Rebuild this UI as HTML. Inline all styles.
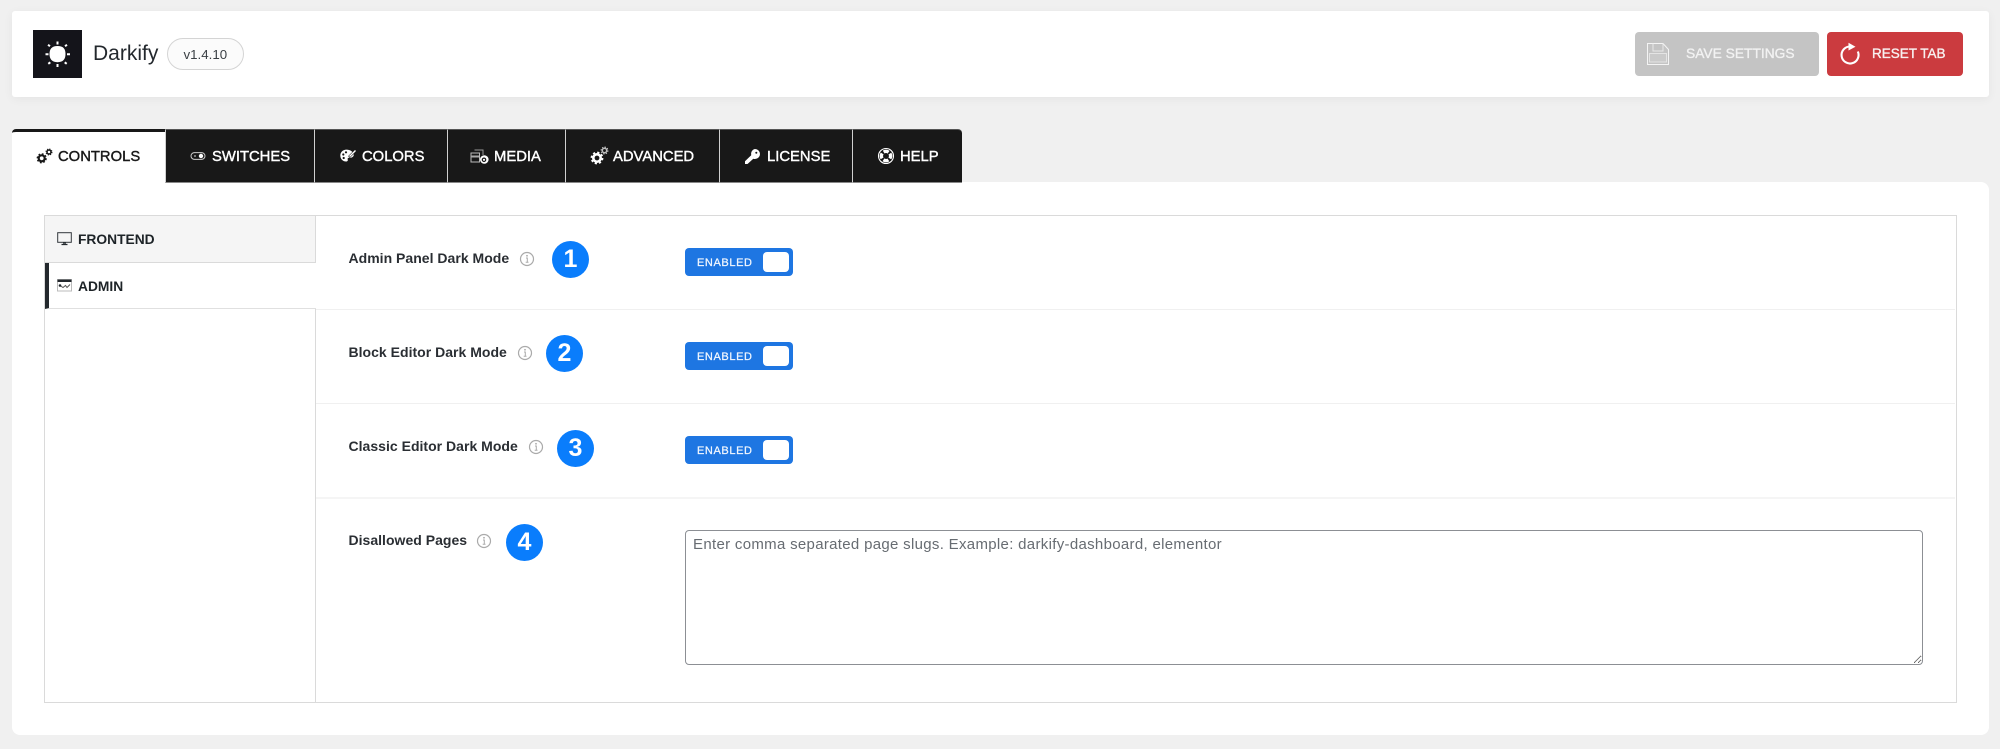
<!DOCTYPE html>
<html lang="en"><head><meta charset="utf-8"><title>Darkify</title>
<style>
*{box-sizing:border-box}
html,body{margin:0;padding:0;background:#f0f0f0}
body{width:2000px;height:749px;overflow:hidden;font-family:"Liberation Sans",sans-serif;position:relative;color:#1d2327;filter:blur(.3px)}
.a{position:absolute}
.t{position:absolute;white-space:nowrap;line-height:1}
.tab{position:absolute;top:129px;height:54px;background:#181818;border-left:1px solid #d0d0d0;border-top:1px solid #555;border-bottom:1px solid #888}
.tl{position:absolute;white-space:nowrap;line-height:1;top:150px;font-size:14.800px;font-weight:400;color:#fff;-webkit-text-stroke:.4px currentColor}
.lab{position:absolute;left:348.500px;font-size:14px;font-weight:700;color:#2a2e33;white-space:nowrap;line-height:1;letter-spacing:.02px}
.badge{position:absolute;width:37px;height:37px;border-radius:50%;background:#0a7dfc;color:#fff;font-size:25px;font-weight:700;text-align:center;line-height:37px}
.tog{position:absolute;left:685px;width:108px;height:28px;background:#1e76e2;border-radius:4px}
.tog span{position:absolute;left:12px;top:10px;font-size:11px;line-height:1;color:#f2f7fe;letter-spacing:.6px;font-weight:400;-webkit-text-stroke:.25px #f2f7fe}
.tog i{position:absolute;left:78px;top:4px;width:26px;height:20px;background:#fff;border-radius:4px}
.sep{position:absolute;left:316px;width:1639px;height:1px;background:#f0f0f0}
textarea::placeholder{color:#676c72;opacity:1}
</style></head><body>

<div class="a" style="left:12px;top:11px;width:1977px;height:86px;background:#fff;border-radius:3px;box-shadow:0 2px 10px rgba(0,0,0,.05)"></div>
<div class="a" style="left:33px;top:30px;width:49px;height:48px;background:#14141a"></div>
<svg class="a" style="left:33px;top:30px" width="49" height="48" viewBox="0 0 49 48">
<path d="M24.500 16c5.600 0 8 2.800 8 8s-2.400 8.200-8 8.200-8-3.200-8-8.200 2.400-8 8-8z" fill="#fff"/>
<path d="M24.500 11.500v3M24.500 34v3M12.500 24.300h3M34 24.300h3M15 14.800l2 1.400M34 14.800l-2 1.400M15.300 33.800l2-1.500M33.700 33.800l-2-1.500" stroke="#fff" stroke-width="2" fill="none"/>
</svg>
<div class="t" style="left:93px;top:43px;font-size:21px;color:#23282d">Darkify</div>
<div class="a" style="left:167px;top:38px;width:77px;height:32px;border:1px solid #d4d4d4;border-radius:16px;background:#fbfbfb"></div>
<div class="t" style="left:183.500px;top:47.500px;font-size:13.300px;color:#3a3f44">v1.4.10</div>

<div class="a" style="left:1635px;top:32px;width:184px;height:44px;background:#c4c4c4;border-radius:4px"></div>
<svg class="a" style="left:1646px;top:42px" width="24" height="24" viewBox="0 0 24 24" fill="none" stroke="#f4f4f4" stroke-width="1">
<path d="M1.500 1.500h15.500l5.500 6v15h-21z"/><path d="M7 1.500v7.500h10V1.500" stroke="#e8e8e8"/><rect x="3.500" y="11.500" width="17" height="8.500" stroke="#e4e4e4" fill="#cacaca"/></svg>
<div class="t" style="left:1686px;top:47px;font-size:13.800px;font-weight:400;color:#f2f2f2;-webkit-text-stroke:.35px #f2f2f2">SAVE SETTINGS</div>
<div class="a" style="left:1827px;top:32px;width:136px;height:44px;background:#cb3b3f;border-radius:4px"></div>
<svg class="a" style="left:1839px;top:42px" width="24" height="24" viewBox="0 0 24 24" fill="none">
<path d="M11 4.500A8.500 8.500 0 1 0 18.800 9.500" stroke="#fff" stroke-width="2.100"/><path d="M9.500 .8l7 3.900-7 3.800z" fill="#fff"/></svg>
<div class="t" style="left:1872px;top:47px;font-size:13.500px;font-weight:400;color:#f8f0f0;-webkit-text-stroke:.35px #f8f0f0">RESET TAB</div>

<div class="a" style="left:12px;top:182px;width:1977px;height:553px;background:#fff;border-radius:0 8px 8px 8px"></div>
<div class="a" style="left:12px;top:129px;width:153px;height:54px;background:#fff;border-top:3px solid #181818;border-radius:4px 0 0 0"></div>
<div class="tab" style="left:165px;width:149px"></div>
<div class="tab" style="left:314px;width:133px"></div>
<div class="tab" style="left:447px;width:119px"></div>
<div class="tab" style="left:565px;width:155px"></div>
<div class="tab" style="left:719px;width:134px"></div>
<div class="tab" style="left:852px;width:110px;border-radius:0 4px 0 0"></div>

<svg class="a" style="left:36px;top:147px" width="18" height="18" viewBox="0 0 18 18" fill="none" stroke="#181818">
<circle cx="5.700" cy="11.300" r="3" stroke-width="2.200"/><circle cx="5.700" cy="11.300" r="4.400" stroke-width="1.400" stroke-dasharray="1.800 1.650"/>
<circle cx="13" cy="5" r="2" stroke-width="1.500"/><circle cx="13" cy="5" r="3" stroke-width="1" stroke-dasharray="1.200 1.150"/></svg>
<div class="tl" style="left:58px;color:#181818">CONTROLS</div>

<svg class="a" style="left:190px;top:150px" width="16" height="12" viewBox="0 0 16 12" fill="none">
<rect x="1" y="2.600" width="14" height="6.800" rx="3.400" stroke="#ccc" stroke-width="1"/><circle cx="11" cy="6" r="2.200" fill="#fff"/><circle cx="5" cy="6" r="1" fill="#999"/></svg>
<div class="tl" style="left:212px">SWITCHES</div>

<svg class="a" style="left:340px;top:149px" width="16" height="14" viewBox="0 0 16 14">
<path d="M6.500 .6C2.800 .6.300 3.200.300 6.500c0 3.600 2.700 6 5.700 6 1.500 0 2.100-1 1.700-2-.4-1 .3-1.800 1.300-1.800h1.500c1.500 0 3.300-1.200 3.300-3C13.300 2.500 10 .6 6.500.6z" fill="#fff"/>
<path d="M9 8L15.500 1.500" stroke="#181818" stroke-width="2.400"/><path d="M9.500 7.500L15.500 1.500" stroke="#fff" stroke-width="1.400"/>
<circle cx="3.300" cy="5.500" r="1.100" fill="#181818"/><circle cx="6" cy="3.300" r="1.100" fill="#181818"/><circle cx="3.700" cy="9" r="1.100" fill="#181818"/></svg>
<div class="tl" style="left:362px">COLORS</div>

<svg class="a" style="left:470px;top:147px" width="19" height="18" viewBox="0 0 19 18" fill="none">
<path d="M4.500 3h8.500v5" stroke="#999" stroke-width="1"/><rect x="1" y="6" width="8.500" height="9" stroke="#bbb" stroke-width="1"/><path d="M1 9.500h8" stroke="#aaa" stroke-width="2"/>
<circle cx="14.300" cy="12.500" r="4.300" fill="#fff"/><circle cx="14" cy="12.800" r="1.700" fill="none" stroke="#181818" stroke-width="1.200"/></svg>
<div class="tl" style="left:494px">MEDIA</div>

<svg class="a" style="left:590px;top:146px" width="19" height="19" viewBox="0 0 19 19" fill="none" stroke="#fff">
<circle cx="7" cy="12" r="3.700" stroke-width="2.600"/><circle cx="7" cy="12" r="5.500" stroke-width="1.800" stroke-dasharray="2.200 2.120"/>
<circle cx="14.500" cy="4.500" r="2.200" stroke="#bbb" stroke-width="1.500"/><circle cx="14.500" cy="4.500" r="3.400" stroke="#ccc" stroke-width="1.100" stroke-dasharray="1.300 1.370"/></svg>
<div class="tl" style="left:613px">ADVANCED</div>

<svg class="a" style="left:744px;top:147px" width="17" height="18" viewBox="0 0 17 18">
<path d="M11 2a5 5 0 0 1 0 10c-.6 0-1.200-.1-1.700-.3L3.500 17H1v-2.800l6.200-6A5 5 0 0 1 11 2z" fill="#fff"/><circle cx="12.300" cy="5.800" r="1" fill="#181818"/></svg>
<div class="tl" style="left:767px">LICENSE</div>

<svg class="a" style="left:877px;top:147px" width="18" height="18" viewBox="0 0 18 18" fill="none">
<circle cx="9" cy="9" r="7.500" stroke="#fff" stroke-width="1.100"/>
<circle cx="9" cy="9" r="4.600" stroke="#fff" stroke-width="3.400" stroke-dasharray="5.200 2.030" transform="rotate(-32.500 9 9)"/></svg>
<div class="tl" style="left:900px">HELP</div>

<div class="a" style="left:44px;top:215px;width:1913px;height:488px;border:1px solid #dadada"></div>
<div class="a" style="left:315px;top:216px;width:1px;height:486px;background:#dadada"></div>
<div class="a" style="left:45px;top:216px;width:270px;height:47px;background:#f5f5f5;border-bottom:1px solid #dadada"></div>
<div class="a" style="left:45px;top:263px;width:271px;height:46px;background:#fff;border-bottom:1px solid #e0e0e0;border-left:4px solid #23282d;border-right:0"></div>

<svg class="a" style="left:57px;top:232px" width="15" height="14" viewBox="0 0 15 14" fill="none">
<rect x=".7" y=".7" width="13.600" height="9.600" stroke="#33383d" stroke-width="1"/><path d="M4.500 12.500h6M6 11h3" stroke="#23282d" stroke-width="1.200"/></svg>
<div class="t" style="left:78px;top:233px;font-size:13.800px;font-weight:700;color:#1d2327">FRONTEND</div>
<svg class="a" style="left:57px;top:279px" width="15" height="13" viewBox="0 0 15 13" fill="none">
<rect x=".5" y=".5" width="14" height="11.500" stroke="#bbb" stroke-width="1"/><rect x=".5" y=".5" width="14" height="2.500" fill="#23282d"/><path d="M3 6.500l3 2 2.500-2 1.500 2 3-3" stroke="#555" stroke-width="1"/><circle cx="3" cy="6.500" r="1.300" fill="#23282d"/></svg>
<div class="t" style="left:78px;top:280px;font-size:13.800px;font-weight:700;color:#1d2327">ADMIN</div>

<div class="sep" style="top:309px"></div>
<div class="sep" style="top:403px"></div>
<div class="sep" style="top:497px;background:#f5f5f5;height:2px"></div>

<div class="lab" style="top:251px">Admin Panel Dark Mode</div>
<div class="lab" style="top:345px">Block Editor Dark Mode</div>
<div class="lab" style="top:439px">Classic Editor Dark Mode</div>
<div class="lab" style="top:533px">Disallowed Pages</div>

<svg class="a" style="left:519px;top:251px" width="16" height="16" viewBox="0 0 16 16" fill="none"><circle cx="8" cy="8" r="6.500" stroke="#aaa" stroke-width="1.200"/><path d="M7 7h1.300v4.200M6.700 11.300h2.800" stroke="#aaa"/><circle cx="8" cy="4.800" r=".9" fill="#aaa"/></svg>
<svg class="a" style="left:517px;top:345px" width="16" height="16" viewBox="0 0 16 16" fill="none"><circle cx="8" cy="8" r="6.500" stroke="#aaa" stroke-width="1.200"/><path d="M7 7h1.300v4.200M6.700 11.300h2.800" stroke="#aaa"/><circle cx="8" cy="4.800" r=".9" fill="#aaa"/></svg>
<svg class="a" style="left:528px;top:439px" width="16" height="16" viewBox="0 0 16 16" fill="none"><circle cx="8" cy="8" r="6.500" stroke="#aaa" stroke-width="1.200"/><path d="M7 7h1.300v4.200M6.700 11.300h2.800" stroke="#aaa"/><circle cx="8" cy="4.800" r=".9" fill="#aaa"/></svg>
<svg class="a" style="left:476px;top:533px" width="16" height="16" viewBox="0 0 16 16" fill="none"><circle cx="8" cy="8" r="6.500" stroke="#aaa" stroke-width="1.200"/><path d="M7 7h1.300v4.200M6.700 11.300h2.800" stroke="#aaa"/><circle cx="8" cy="4.800" r=".9" fill="#aaa"/></svg>

<div class="badge" style="left:552px;top:241px">1</div>
<div class="badge" style="left:546px;top:335px">2</div>
<div class="badge" style="left:557px;top:430px">3</div>
<div class="badge" style="left:506px;top:524px">4</div>

<div class="tog" style="top:248px"><span>ENABLED</span><i></i></div>
<div class="tog" style="top:342px"><span>ENABLED</span><i></i></div>
<div class="tog" style="top:436px"><span>ENABLED</span><i></i></div>

<textarea class="a" style="left:685px;top:530px;width:1238px;height:135px;border:1px solid #8c8f94;border-radius:4px;background:#fff;padding:5px 7px;margin:0;font:15px/18px 'Liberation Sans',sans-serif;outline:0;letter-spacing:.31px" placeholder="Enter comma separated page slugs. Example: darkify-dashboard, elementor"></textarea>
</body></html>
